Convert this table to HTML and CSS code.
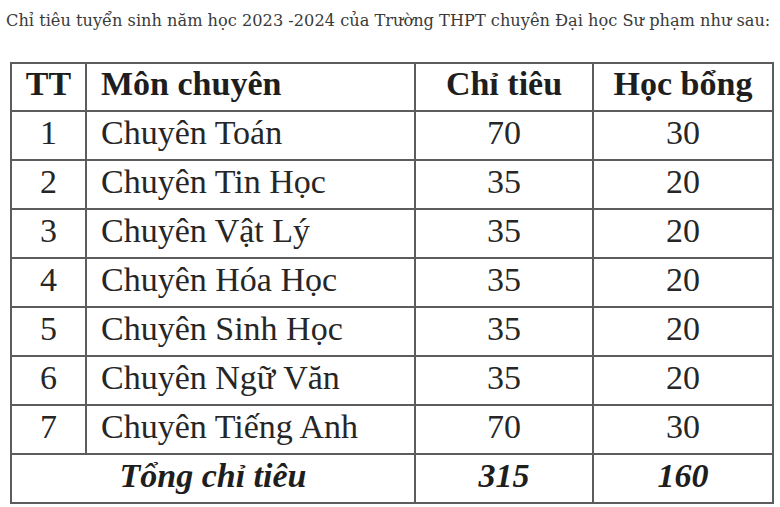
FILE: index.html
```html
<!DOCTYPE html>
<html lang="vi">
<head>
<meta charset="utf-8">
<link rel="stylesheet" href="styles.css">
</head>
<body>
<p class="intro">Chỉ tiêu tuyển sinh năm học 2023 -2024 của Trường THPT chuyên Đại học Sư phạm như sau:</p>
<table class="quota">
  <colgroup>
    <col class="c-tt"><col class="c-mon"><col class="c-ct"><col class="c-hb">
  </colgroup>
  <thead>
    <tr><th>TT</th><th class="left">Môn chuyên</th><th>Chỉ tiêu</th><th>Học bổng</th></tr>
  </thead>
  <tbody>
    <tr><td>1</td><td class="left">Chuyên Toán</td><td>70</td><td>30</td></tr>
    <tr><td>2</td><td class="left">Chuyên Tin Học</td><td>35</td><td>20</td></tr>
    <tr><td>3</td><td class="left">Chuyên Vật Lý</td><td>35</td><td>20</td></tr>
    <tr><td>4</td><td class="left">Chuyên Hóa Học</td><td>35</td><td>20</td></tr>
    <tr><td>5</td><td class="left">Chuyên Sinh Học</td><td>35</td><td>20</td></tr>
    <tr><td>6</td><td class="left">Chuyên Ngữ Văn</td><td>35</td><td>20</td></tr>
    <tr><td>7</td><td class="left">Chuyên Tiếng Anh</td><td>70</td><td>30</td></tr>
    <tr class="total"><td colspan="2">Tổng chỉ tiêu</td><td>315</td><td>160</td></tr>
  </tbody>
</table>
</body>
</html>
```
FILE: styles.css
```css
html, body {
  margin: 0;
  padding: 0;
  background: #ffffff;
}
.intro {
  margin: 0;
  padding: 11px 0 0 6px;
  height: 28px;
  font-family: "DejaVu Serif", serif;
  font-size: 16.2px;
  line-height: 20px;
  color: #3a3a3a;
  white-space: nowrap;
}
.quota {
  margin: 23px 0 0 10px;
  border-collapse: collapse;
  table-layout: fixed;
  width: 762px;
  font-family: "Liberation Serif", "Times New Roman", serif;
  font-size: 34px;
  color: #262626;
}
.c-tt { width: 75px; }
.c-mon { width: 329px; }
.c-ct { width: 178px; }
.c-hb { width: 180px; }
.quota th, .quota td {
  border: 2px solid #5c5c5c;
  text-align: center;
  padding: 0 0 6px 0;
  line-height: 34px;
  white-space: nowrap;
  overflow: hidden;
}
.quota th {
  height: 40px;
  font-weight: bold;
  color: #1e1e1e;
}
.quota td {
  height: 41px;
}
.quota .left {
  text-align: left;
  padding-left: 14px;
}
.quota .total td {
  font-weight: bold;
  font-style: italic;
  color: #1e1e1e;
}
```
